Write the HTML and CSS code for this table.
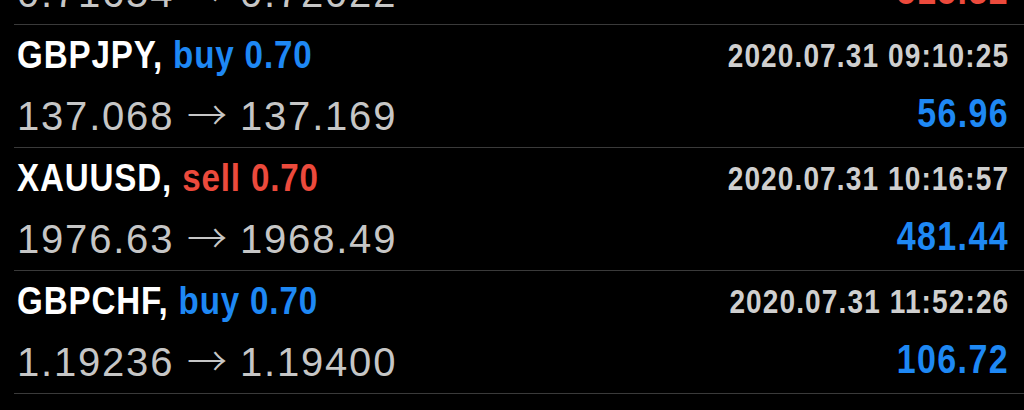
FILE: index.html
```html
<!DOCTYPE html>
<html lang="en">
<head>
<meta charset="utf-8">
<title>Trade history</title>
<link rel="stylesheet" href="styles.css">
</head>
<body>
<div class="viewport">
  <ul class="deals">
    <li class="deal">
      <div class="col-left">
        <div class="title"><span class="cond"><span class="symbol">AUDUSD,</span> <span class="buy">buy 0.70</span></span></div>
        <div class="prices">0.71654 <span class="arrow">→</span> 0.72022</div>
      </div>
      <div class="col-right">
        <div class="time"><span class="cond">2020.07.31 08:41:12</span></div>
        <div class="profit loss"><span class="cond">515.32</span></div>
      </div>
    </li>
    <li class="deal">
      <div class="col-left">
        <div class="title"><span class="cond"><span class="symbol">GBPJPY,</span> <span class="buy">buy 0.70</span></span></div>
        <div class="prices">137.068 <span class="arrow">→</span> 137.169</div>
      </div>
      <div class="col-right">
        <div class="time"><span class="cond">2020.07.31 09:10:25</span></div>
        <div class="profit gain"><span class="cond">56.96</span></div>
      </div>
    </li>
    <li class="deal">
      <div class="col-left">
        <div class="title"><span class="cond"><span class="symbol">XAUUSD,</span> <span class="sell">sell 0.70</span></span></div>
        <div class="prices">1976.63 <span class="arrow">→</span> 1968.49</div>
      </div>
      <div class="col-right">
        <div class="time"><span class="cond">2020.07.31 10:16:57</span></div>
        <div class="profit gain"><span class="cond">481.44</span></div>
      </div>
    </li>
    <li class="deal">
      <div class="col-left">
        <div class="title"><span class="cond"><span class="symbol">GBPCHF,</span> <span class="buy">buy 0.70</span></span></div>
        <div class="prices">1.19236 <span class="arrow">→</span> 1.19400</div>
      </div>
      <div class="col-right">
        <div class="time"><span class="cond">2020.07.31 11:52:26</span></div>
        <div class="profit gain"><span class="cond">106.72</span></div>
      </div>
    </li>
    <li class="deal"></li>
  </ul>
</div>
</body>
</html>
```

FILE: styles.css
```css
html, body {
  margin: 0;
  padding: 0;
  background: #000;
}

.viewport {
  height: 410px;
  overflow: hidden;
}

.deals {
  list-style: none;
  margin: -99px 0 0 0;
  padding: 0;
}

.deal {
  display: flex;
  justify-content: space-between;
  align-items: flex-start;
  margin-left: 14px;
  padding: 0 15px 5px 3px;
  border-top: 1px solid #3a3a3a;
  height: 117px;
}

.cond {
  display: inline-block;
  transform: scaleX(0.85);
  transform-origin: left center;
}

.col-right .cond {
  transform-origin: right center;
}

.title {
  font-family: "Liberation Sans", Arial, sans-serif;
  font-weight: 700;
  font-size: 39px;
  line-height: 59px;
  letter-spacing: 1px;
  white-space: nowrap;
}

.symbol { color: #ffffff; }
.buy { color: #1e88f4; }
.sell { color: #ec4a3c; }

.prices {
  font-family: "Liberation Sans", Arial, sans-serif;
  font-size: 40px;
  line-height: 58px;
  letter-spacing: 1.8px;
  color: #c6c6c6;
  white-space: nowrap;
}

.arrow {
  font-family: "Noto Sans CJK JP", "DejaVu Sans", sans-serif;
  font-weight: 300;
  letter-spacing: 0;
}

.col-right {
  display: flex;
  flex-direction: column;
  align-items: flex-end;
}

.time {
  font-family: "Liberation Sans", Arial, sans-serif;
  font-weight: 700;
  font-size: 33px;
  line-height: 61px;
  letter-spacing: 1.3px;
  color: #cfcfcf;
  white-space: nowrap;
}

.profit {
  font-family: "Liberation Sans", Arial, sans-serif;
  font-weight: 700;
  font-size: 40px;
  line-height: 54px;
  letter-spacing: 1.6px;
  white-space: nowrap;
}

.gain { color: #1e88f4; }
.loss { color: #ec4a3c; }
```
